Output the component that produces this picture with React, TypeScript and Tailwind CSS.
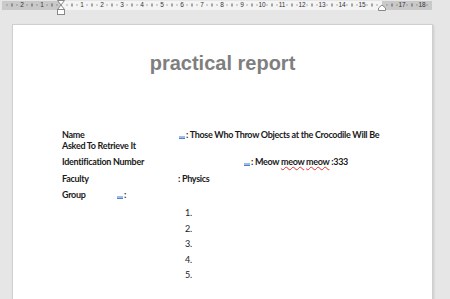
import React from 'react';

const ORIGIN = 62;
const CM = 20;

const Ruler = () => {
  const marks: React.ReactNode[] = [];
  for (let n = -3; n <= 18; n++) {
    const x = ORIGIN + n * CM;
    if (n !== 0 && n !== 16 && x > 4 && x < 430) {
      marks.push(
        <text key={'n' + n} x={x} y={7.2} fontSize={6.5} textAnchor="middle" fill="#333" fontFamily="Liberation Sans, sans-serif">
          {Math.abs(n)}
        </text>
      );
    }
    [5, 10, 15].forEach((q) => {
      const qx = x + q;
      if (qx < 4 || qx > 430) return;
      if (Math.abs(qx - ORIGIN) < 3 || Math.abs(qx - 382) < 3) return;
      if (q === 10) marks.push(<rect key={'t' + n + q} x={qx - 0.5} y={3.5} width={1} height={3} fill="#555" />);
      else marks.push(<rect key={'d' + n + q} x={qx - 0.5} y={4.5} width={1} height={1} fill="#666" />);
    });
  }
  return (
    <svg width={450} height={18} className="block absolute left-0 top-0">
      <rect x={2} y={1} width={430} height={9} fill="#f4f4f4" />
      <rect x={2} y={1} width={59} height={9} fill="#c9c9c9" />
      <rect x={382} y={1} width={50} height={9} fill="#c9c9c9" />
      {marks}
      {/* left indent marker */}
      <path d="M57.5 0.5 L64.5 0.5 L61 5 Z" fill="#fff" stroke="#888" strokeWidth={1} />
      <path d="M61 5 L64.5 9.5 L57.5 9.5 Z" fill="#fff" stroke="#888" strokeWidth={1} />
      <rect x={57.5} y={9.5} width={7} height={5} fill="#fff" stroke="#888" strokeWidth={1} />
      {/* right indent marker */}
      <path d="M378.5 10.5 L378.5 8 L382 5 L385.5 8 L385.5 10.5 Z" fill="#fff" stroke="#888" strokeWidth={1} />
    </svg>
  );
};

// blue tab placeholder under the colon
const Mark = () => (
  <span className="inline-block w-[6px] h-[3px] bg-[#9dbcec] border-b border-[#4f7fd0] align-[-1px] mr-[1px]" />
);

const App = () => {
  return (
    <div className="relative w-[450px] h-[299px] overflow-hidden bg-[#e6e6e6]">
      <Ruler />
      <div className="absolute left-[12px] top-[24px] w-[421px] h-[300px] bg-white border border-[#cfcfcf] shadow-[1px_1px_2px_rgba(0,0,0,0.12)]">
        <div className="pt-[26px] text-center font-['Liberation_Sans',Arial,sans-serif] font-bold text-[20px] leading-[24px] text-[#7f7f7f]">
          practical report
        </div>
        <div className="mt-[54px] pl-[49px] font-['Lato',sans-serif] font-bold text-[9px] leading-[11px] tracking-[-0.3px] text-[#1a1a1a]">
          <div className="flex">
            <span className="w-[117px]">Name</span>
            <span><Mark />: Those Who Throw Objects at the Crocodile Will Be</span>
          </div>
          <div>Asked To Retrieve It</div>
          <div className="flex mt-[5px]">
            <span className="w-[182px]">Identification Number</span>
            <span>
              <Mark />: Meow <span className="underline decoration-wavy decoration-[#e03030] decoration-[0.5px]">meow</span>{' '}
              <span className="underline decoration-wavy decoration-[#e03030] decoration-[0.5px]">meow</span> :333
            </span>
          </div>
          <div className="flex mt-[6px]">
            <span className="w-[116px]">Faculty</span>
            <span>: Physics</span>
          </div>
          <div className="flex mt-[5px]">
            <span className="w-[55px]">Group</span>
            <span><Mark />:</span>
          </div>
          <ol className="mt-[7px] pl-[123px] flex flex-col gap-[4.5px] font-normal">
            {[1, 2, 3, 4, 5].map((n) => (
              <li key={n} className="h-[11px]">{n}.</li>
            ))}
          </ol>
        </div>
      </div>
    </div>
  );
};

export default App;
